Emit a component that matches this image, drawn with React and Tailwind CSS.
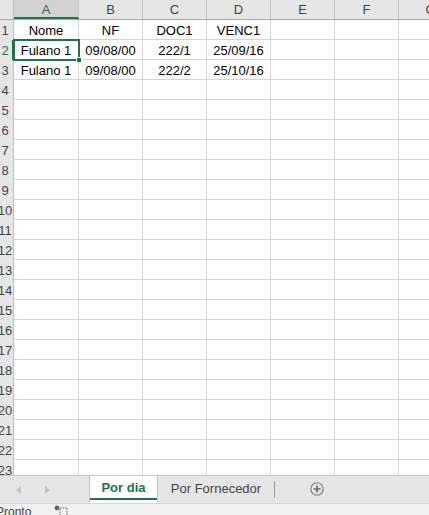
import React from "react";

const cols = [
    { name: "A", w: "w-[65px]" },
    { name: "B", w: "w-[64px]" },
    { name: "C", w: "w-[64px]" },
    { name: "D", w: "w-[64px]" },
    { name: "E", w: "w-[64px]" },
    { name: "F", w: "w-[64px]" },
    { name: "G", w: "w-[64px]" },
];

const data = [
    ["Nome", "NF", "DOC1", "VENC1"],
    ["Fulano 1", "09/08/00", "222/1", "25/09/16"],
    ["Fulano 1", "09/08/00", "222/2", "25/10/16"],
];

const rows = Array.from({ length: 24 }, (_, i) => i + 1);

const RowHeader = ({ n }) => (
    <div className={`w-[14px] h-full shrink-0 overflow-hidden flex items-center bg-[#e6e6e6] border-r border-[#bdbdbd] ${n === 2 ? "text-[#217346] bg-[#d2d2d2] border-r-2 border-r-[#217346]" : "text-[#444]"}`}>
        <div className="w-[10px] flex justify-center pt-[2px]">
            <span className="whitespace-nowrap">{n}</span>
        </div>
    </div>
);

const App = () => {
    return (
        <div className="w-[429px] h-[515px] overflow-hidden flex flex-col bg-white text-[13px] text-black" style={{ fontFamily: '"Liberation Sans", Arial, sans-serif' }}>
            <div className="relative flex-1 overflow-hidden">
                {/* column header */}
                <div className="flex h-[20px] border-b border-[#ababab] bg-[#e6e6e6]">
                    <div className="w-[14px] shrink-0 border-r border-[#bdbdbd]"></div>
                    {cols.map((c) => (
                        <div key={c.name} className={`${c.w} shrink-0 flex items-center justify-center border-r border-[#c8c8c8] whitespace-nowrap ${c.name === "A" ? "text-[#217346] bg-[#d2d2d2] border-b-2 border-b-[#217346] pt-[2px]" : "text-[#444]"}`}>
                            {c.name}
                        </div>
                    ))}
                </div>
                {rows.map((n) => (
                    <div key={n} className="flex h-[20px]">
                        <RowHeader n={n} />
                        {cols.map((c, ci) => (
                            <div key={c.name} className={`${c.w} shrink-0 flex items-center justify-center border-r border-b border-[#d4d4d4] pt-[3px] whitespace-nowrap`}>
                                {data[n - 1] && data[n - 1][ci]}
                            </div>
                        ))}
                    </div>
                ))}
                {/* active cell */}
                <div className="absolute left-[13px] top-[39px] w-[67px] h-[22px] border-2 border-[#217346]">
                    <div className="absolute right-[-4px] bottom-[-4px] w-[6px] h-[6px] bg-[#217346] border border-white"></div>
                </div>
            </div>

            {/* sheet tabs */}
            <div className="h-[28px] shrink-0 flex border-t border-[#c6c6c6] bg-[#e6e6e6] text-[13px]">
                <div className="w-[89px] flex items-center">
                    <svg width="6" height="8" viewBox="0 0 6 8" className="ml-[16px]"><path d="M5 0 L0 4 L5 8 Z" fill="#c2c2c2" /></svg>
                    <svg width="6" height="8" viewBox="0 0 6 8" className="ml-[22px]"><path d="M1 0 L6 4 L1 8 Z" fill="#c2c2c2" /></svg>
                </div>
                <div className="w-[69px] bg-white border-x border-[#c6c6c6] flex flex-col">
                    <div className="flex-1 flex items-center justify-center font-bold text-[#217346] pt-[1px]">Por dia</div>
                    <div className="h-[2px] bg-[#217346] mb-[3px]"></div>
                </div>
                <div className="w-[116px] flex items-center justify-center text-[#444] pb-[2px]">Por Fornecedor</div>
                <div className="w-px h-[17px] bg-[#9a9a9a] self-center mb-[1px]"></div>
                <div className="flex items-center ml-[35px] pb-[2px]">
                    <svg width="14" height="14" viewBox="0 0 14 14">
                        <circle cx="7" cy="7" r="6.2" fill="none" stroke="#7a7a7a" strokeWidth="1.1" />
                        <path d="M7 3.5 V10.5 M3.5 7 H10.5" stroke="#6a6a6a" strokeWidth="1.6" />
                    </svg>
                </div>
            </div>

            {/* status bar */}
            <div className="h-[12px] shrink-0 bg-[#f0f0f0] border-t border-[#d6d6d6] flex items-start relative overflow-hidden text-[12px] text-[#444]">
                <span className="ml-[-4px] mt-[2px] leading-none">Pronto</span>
                <svg width="14" height="12" viewBox="0 0 14 12" className="ml-[23px] mt-[1px]">
                    <circle cx="3" cy="3" r="2.4" fill="#666" />
                    <rect x="6" y="3" width="7" height="8" fill="none" stroke="#666" strokeWidth="1" strokeDasharray="1.5 1" />
                </svg>
            </div>
        </div>
    );
};

export default App;
